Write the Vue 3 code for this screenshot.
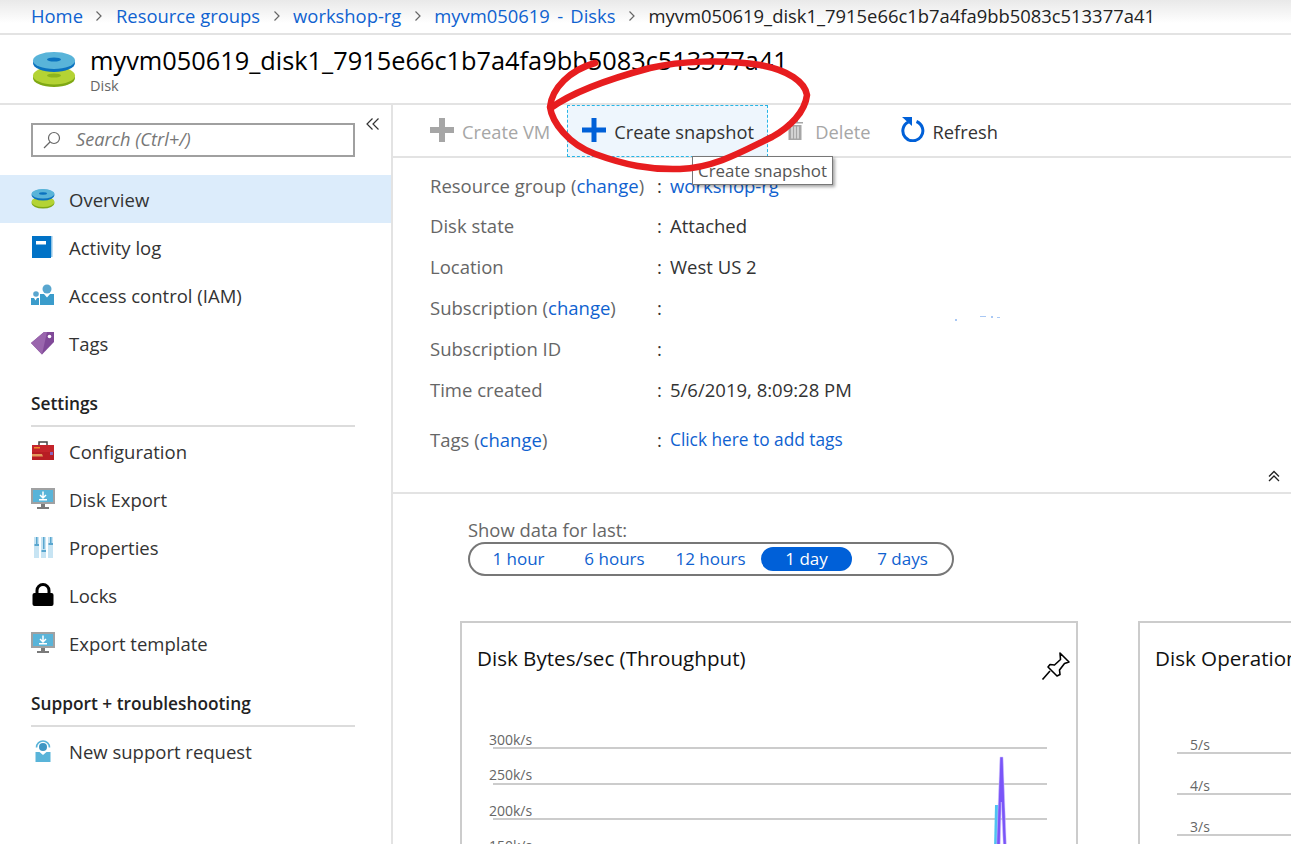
<script setup>
const crumbs = ['Home', 'Resource groups', 'workshop-rg', 'myvm050619 - Disks']
const ranges = ['1 hour', '6 hours', '12 hours', '1 day', '7 days']
const gridA = ['300k/s', '250k/s', '200k/s', '150k/s']
const gridB = ['5/s', '4/s', '3/s']
</script>

<template>
  <div class="page">
    <nav class="crumbs">
      <template v-for="c in crumbs" :key="c">
        <a class="link">{{ c }}</a>
        <svg class="chev" width="8" height="12" viewBox="0 0 8 12"><path d="M1.5 1.5 6 6l-4.5 4.5" fill="none" stroke="#666" stroke-width="1.2" /></svg>
      </template>
      <span class="crumb-last">myvm050619_disk1_7915e66c1b7a4fa9bb5083c513377a41</span>
    </nav>

    <header class="head">
      <svg class="head-icon" width="44" height="38" viewBox="0 0 44 38">
        <ellipse cx="22" cy="27" rx="21" ry="9" fill="#7fa814" />
        <ellipse cx="22" cy="24.500" rx="21" ry="9" fill="#b4d334" />
        <ellipse cx="22" cy="24.500" rx="7" ry="2" fill="#8fb51c" />
        <ellipse cx="22" cy="12" rx="21" ry="9" fill="#0b72bf" />
        <ellipse cx="22" cy="9.500" rx="21" ry="8.500" fill="#59b4d9" />
        <ellipse cx="22" cy="8.500" rx="7" ry="2" fill="#0b72bf" />
      </svg>
      <div>
        <h1>myvm050619_disk1_7915e66c1b7a4fa9bb5083c513377a41</h1>
        <div class="sub">Disk</div>
      </div>
    </header>

    <div class="body">
      <aside class="side">
        <div class="search-row">
          <div class="search">
            <svg width="20" height="20" viewBox="0 0 20 20"><circle cx="12" cy="8" r="5.500" fill="none" stroke="#666" stroke-width="1.200" /><path d="M8 12 2 18" stroke="#666" stroke-width="1.200" /></svg>
            <span>Search (Ctrl+/)</span>
          </div>
          <svg class="collapse" width="14" height="14" viewBox="0 0 14 14"><path d="M6.500 1.500 1 7l5.500 5.500M12.500 1.500 7 7l5.500 5.500" fill="none" stroke="#333" stroke-width="1.200" /></svg>
        </div>

        <div class="item active">
          <svg width="24" height="20" viewBox="0 0 24 20"><ellipse cx="12" cy="14" rx="11.500" ry="5.500" fill="#7fa814" /><ellipse cx="12" cy="12.800" rx="11.500" ry="5.200" fill="#b4d334" /><ellipse cx="12" cy="6" rx="11.500" ry="5.500" fill="#0b72bf" /><ellipse cx="12" cy="4.800" rx="11.500" ry="4.800" fill="#59b4d9" /><ellipse cx="12" cy="4.500" rx="4" ry="1.200" fill="#0b72bf" /></svg>
          Overview
        </div>
        <div class="item">
          <svg width="24" height="24" viewBox="0 0 24 24"><path d="M2 1h19.500v21H2z" fill="#8cc3e6" /><path d="M1 1h19v22H1z" fill="#0072c6" /><path d="M5 6h10v3.500H5z" fill="#fff" /></svg>
          Activity log
        </div>
        <div class="item">
          <svg width="24" height="24" viewBox="0 0 24 24"><circle cx="16" cy="6" r="4.500" fill="#59a6cf" /><circle cx="5" cy="11" r="2.800" fill="#59a6cf" /><path d="M9 11h14v11h-14zM0 15h8v7H0z" fill="#3b9ccb" /><path d="m13 11 3 3.500 3-3.500M3 15l1.500 2.500L6 15" fill="#fff" /></svg>
          Access control (IAM)
        </div>
        <div class="item">
          <svg width="24" height="24" viewBox="0 0 24 24"><path d="M0 12 13 1h10v10L11 23.500z" fill="#804998" /><path d="M0 12 13 1l3 0L11 23.500z" fill="#9a66ad" /><circle cx="18.500" cy="5.500" r="1.800" fill="#fff" /></svg>
          Tags
        </div>

        <div class="group">Settings</div>
        <div class="item">
          <svg width="24" height="24" viewBox="0 0 24 24"><path d="M8 6V3h8v3" fill="none" stroke="#444" stroke-width="1.500" /><path d="M1 6h22v7H1z" fill="#c4242b" /><path d="M1 13h22v8H1z" fill="#b81d24" /><path d="M1 15h10l1 2.500H1z" fill="#e29a5c" /><path d="M3 8h6v1.500H3z" fill="#ef8a2c" /><path d="M19 13h3v3h-3z" fill="#8a63b8" /></svg>
          Configuration
        </div>
        <div class="item">
          <svg width="24" height="24" viewBox="0 0 24 24"><path d="M0 1h24v16H0z" fill="#a0a1a2" /><path d="M2 3h20v12H2z" fill="#59b4d9" /><path d="M10 17h4v3h-4zM6 20h12v2H6z" fill="#7a7a7a" /><path d="M12 4.500v6M9 8l3 3 3-3M8 12.800h8" fill="none" stroke="#fff" stroke-width="1.500" /></svg>
          Disk Export
        </div>
        <div class="item">
          <svg width="24" height="24" viewBox="0 0 24 24"><path d="M3 2h5v21H3zM10 2h5v21h-5zM17 2h5v21h-5z" fill="#c7e4f3" /><path d="M5 2h1.500v7H5zM12 2h1.500v12H12zM19 2h1.500v6H19z" fill="#59a6cf" /><path d="M3.500 9h4.500v2H3.500zM10.500 15h4.500v2h-4.500zM17.500 8h4.500v2h-4.500z" fill="#59a6cf" /></svg>
          Properties
        </div>
        <div class="item">
          <svg width="24" height="24" viewBox="0 0 24 24"><path d="M6 11V7.500a6 6 0 0 1 12 0V11" fill="none" stroke="#000" stroke-width="3" /><rect x="1.500" y="10" width="21" height="13" rx="2" fill="#000" /></svg>
          Locks
        </div>
        <div class="item">
          <svg width="24" height="24" viewBox="0 0 24 24"><path d="M0 1h24v16H0z" fill="#a0a1a2" /><path d="M2 3h20v12H2z" fill="#59b4d9" /><path d="M10 17h4v3h-4zM6 20h12v2H6z" fill="#7a7a7a" /><path d="M12 4.500v6M9 8l3 3 3-3M8 12.800h8" fill="none" stroke="#fff" stroke-width="1.500" /></svg>
          Export template
        </div>

        <div class="group">Support + troubleshooting</div>
        <div class="item">
          <svg width="24" height="24" viewBox="0 0 24 24"><path d="M5.500 8.500a6.500 6.500 0 1 1 13 0" fill="none" stroke="#59b4d9" stroke-width="1.600" /><circle cx="12" cy="8" r="4" fill="#3f97c4" /><path d="M4.500 13h15v10h-15z" fill="#59b4d9" /><path d="m8.500 13 3.500 3 3.500-3z" fill="#fff" /></svg>
          New support request
        </div>
      </aside>

      <main class="main">
        <div class="toolbar">
          <div class="tool off">
            <svg width="24" height="24" viewBox="0 0 24 24"><path d="M9 0h6v9h9v6h-9v9H9v-9H0V9h9z" fill="#a6a6a6" /></svg>
            Create VM
          </div>
          <div class="tool snap">
            <svg width="24" height="24" viewBox="0 0 24 24"><path d="M9.500 0h5v9.500H24v5h-9.500V24h-5v-9.500H0v-5h9.500z" fill="#0060d8" /></svg>
            Create snapshot
          </div>
          <div class="tool off del">
            <svg width="16" height="20" viewBox="0 0 16 20"><path d="M0 2h16v1.500H0zM5 0h6v2H5zM1.500 5h13v15h-13z" fill="#a6a6a6" /><path d="M5 6.500v12M8 6.500v12M11 6.500v12" stroke="#fff" stroke-width="1" /></svg>
            Delete
          </div>
          <div class="tool refresh">
            <svg width="24" height="25" viewBox="0 0 24 25"><path d="M15.500 4.500a10 10 0 1 1-8 .300" fill="none" stroke="#0060d8" stroke-width="3" /><path d="M1 0h10v9z" fill="#0060d8" /></svg>
            Refresh
          </div>
        </div>

        <section class="info">
          <div class="info-row r1"><span class="k">Resource group (<a class="link">change</a>)</span><span class="colon">:</span><a class="link">workshop-rg</a></div>
          <div class="info-row"><span class="k">Disk state</span><span class="colon">:</span><span class="v">Attached</span></div>
          <div class="info-row"><span class="k">Location</span><span class="colon">:</span><span class="v">West US 2</span></div>
          <div class="info-row"><span class="k">Subscription (<a class="link">change</a>)</span><span class="colon">:</span><span class="v"></span></div>
          <div class="info-row"><span class="k">Subscription ID</span><span class="colon">:</span><span class="v"></span></div>
          <div class="info-row"><span class="k">Time created</span><span class="colon">:</span><span class="v">5/6/2019, 8:09:28 PM</span></div>
          <div class="info-row r7"><span class="k">Tags (<a class="link">change</a>)</span><span class="colon">:</span><a class="link small">Click here to add tags</a></div>
          <svg class="specks" width="50" height="8" viewBox="0 0 50 8"><path d="M0 5h2v2H0zM25 2h6v1h-6zM36 2h2v2h-2zM42 3h3v1h-3z" fill="#a9c8f4" /></svg>
          <svg class="fold" width="12" height="12" viewBox="0 0 12 12"><path d="M1 6.500 6 1.500l5 5M1 11 6 6l5 5" fill="none" stroke="#222" stroke-width="1.300" /></svg>
        </section>

        <section class="charts">
          <div class="range-label">Show data for last:</div>
          <div class="range">
            <span v-for="r in ranges" :key="r" class="range-item" :class="{ on: r === '1 day' }">{{ r }}</span>
          </div>
          <div class="cards">
            <div class="card first">
              <div class="card-title">Disk Bytes/sec (Throughput)</div>
              <svg class="pin" width="30" height="30" viewBox="0 0 30 30"><path d="M19 2 28 11l-4.500 1.500-5 6.500 .5 4.500-3 1.500-9-9 2-2.500 4.500.5 6-5.500z" fill="#fff" stroke="#000" stroke-width="1.600" stroke-linejoin="round" /><path d="M9 20 1.500 28.500" stroke="#000" stroke-width="1.600" /></svg>
              <div class="grid grid-a">
                <div v-for="g in gridA" :key="g" class="grid-row">{{ g }}</div>
              </div>
              <svg class="spike" width="20" height="100" viewBox="0 0 20 100"><path d="M5 55h3.500L8 100H4z" fill="#4fc3f0" /><path d="M10 7h3l3.500 93h-3L11.300 52 10 100H6.500z" fill="#7a55f8" stroke="#d5c9fd" stroke-width=".5" /></svg>
            </div>
            <div class="card second">
              <div class="card-title">Disk Operations/sec</div>
              <div class="grid grid-b">
                <div v-for="g in gridB" :key="g" class="grid-row">{{ g }}</div>
              </div>
            </div>
          </div>
        </section>
      </main>
    </div>

    <div class="tip">Create snapshot</div>
    <svg class="scribble" width="1291" height="844" viewBox="0 0 1291 844">
      <path d="M595 63C570 70 552 88 550 107 552 122 568 144 595 154 625 165 650 170 680 169 715 168 745 150 772 137 790 127 805 112 807 95 805 82 788 70 760 65 725 59 680 61 650 68 620 76 575 90 551 108" fill="none" stroke="#e71d1f" stroke-width="6.500" stroke-linecap="round" />
    </svg>
  </div>
</template>

<style>
html, body { margin: 0; background: #fff; }
</style>

<style scoped>
.page {
  position: relative;
  width: 1291px;
  height: 844px;
  overflow: hidden;
  background: #fff;
  color: #333;
  font-family: "Open Sans", "Noto Sans", sans-serif;
  font-size: 18.5px;
}
.link { color: #0f62d0; }
.crumbs {
  height: 35px;
  box-sizing: border-box;
  padding-left: 31px;
  display: flex;
  align-items: center;
  gap: 12.500px;
  font-size: 18.4px;
  background: linear-gradient(#e9e9e9, #fff 70%);
  border-bottom: 2px solid #e3e3e3;
  padding-bottom: 2px;
}
.crumbs a:nth-of-type(4) { word-spacing: 2.500px; }
.crumb-last { color: #222; }
.head {
  height: 66px;
  padding-top: 2px;
  display: flex;
  align-items: center;
  padding-left: 32px;
  gap: 14px;
  border-bottom: 2px solid #e3e3e3;
}
h1 {
  margin: 0;
  font-size: 25.35px;
  line-height: 30px;
  font-weight: 400;
  color: #000;
}
.sub { margin-top: 2px; font-size: 14.5px; line-height: 18px; color: #666; }
.body { display: flex; height: 739px; }
.side {
  width: 391px;
  flex: none;
  border-right: 2px solid #e3e3e3;
}
.search-row { height: 70px; position: relative; padding: 18px 0 0 31px; box-sizing: border-box; }
.search {
  width: 324px;
  height: 34px;
  box-sizing: border-box;
  border: 2px solid #a0a0a0;
  display: flex;
  align-items: center;
  padding-left: 9px;
  gap: 14px;
  color: #777;
  font-style: italic;
  font-size: 18.2px;
}
.search span { margin-top: -2px; }
.collapse { position: absolute; left: 366px; top: 12px; }
.item {
  height: 48px;
  box-sizing: border-box;
  padding-top: 1px;
  display: flex;
  align-items: center;
  padding-left: 31px;
  gap: 14px;
}
.item svg { width: 24px; flex: none; margin-top: -1px; }
.active { background: #dcecfb; }
.group {
  margin: 24px 0 0 31px;
  height: 36px;
  box-sizing: border-box;
  font-size: 17.3px;
  line-height: 25px;
  font-weight: 600;
  color: #222;
  border-bottom: 2px solid #dcdcdc;
  width: 324px;
}
.main { flex: 1; min-width: 0; }
.toolbar {
  height: 53px;
  box-sizing: border-box;
  display: flex;
  align-items: center;
  border-bottom: 2px solid #e3e3e3;
  padding-left: 37px;
  font-size: 18.3px;
}
.tool { display: flex; align-items: center; gap: 8px; height: 100%; box-sizing: border-box; padding-top: 2px; }
.tool svg { margin-top: -4px; }
.off { color: #a6a6a6; }
.snap {
  width: 201px;
  height: 52px;
  margin-left: 17px;
  padding-left: 14px;
  background: #eef6fd;
  border: 1px dashed #27b5e6;
}
.del { margin-left: 19px; gap: 12px; }
.refresh { margin-left: 30px; }
.info {
  height: 336px;
  box-sizing: border-box;
  position: relative;
  padding: 8px 0 0 37px;
  border-bottom: 2px solid #e3e3e3;
}
.info-row { height: 41px; display: flex; align-items: center; }
.r1 { height: 39px; }
.r7 { height: 59px; }
.k { width: 227px; color: #666; flex: none; }
.colon { width: 13px; color: #333; flex: none; }
.v { color: #333; }
.small { font-size: 17.3px; }
.specks { position: absolute; left: 562px; top: 156px; }
.fold { position: absolute; right: 11px; top: 312px; }
.charts { padding: 24px 0 0 75px; position: relative; }
.range-label { font-size: 18.4px; line-height: 24px; color: #666; }
.range {
  width: 486px;
  height: 34px;
  box-sizing: border-box;
  border: 2px solid #777;
  border-radius: 17px;
  display: flex;
  align-items: center;
  gap: 5px;
  padding-left: 3px;
}
.range-item {
  width: 91px;
  height: 24px;
  line-height: 24px;
  border-radius: 12px;
  text-align: center;
  color: #0f62d0;
  font-size: 17px;
}
.on { background: #0060d8; color: #fff; }
.cards { display: flex; gap: 60px; margin-top: 45px; margin-left: -8px; }
.card {
  position: relative;
  width: 618px;
  height: 400px;
  flex: none;
  box-sizing: border-box;
  border: 2px solid #ccc;
}
.card-title {
  margin: 22px 0 0 15px;
  font-size: 20.6px;
  line-height: 26px;
  color: #111;
  white-space: nowrap;
}
.pin { position: absolute; left: 579px; top: 28px; }
.grid { font-size: 14px; color: #666; }
.grid-a { margin: 43px 0 0 31px; width: 554px; }
.grid-row {
  height: 35.300px;
  box-sizing: border-box;
  border-bottom: 2px solid #ccc;
  line-height: 18px;
  padding-top: 17px;
  text-indent: -4px;
}
.grid-b { margin: 42px 0 0 37px; }
.grid-b .grid-row { height: 41px; padding-top: 23px; text-indent: 13px; }
.second { overflow: hidden; }
.spike { position: absolute; left: 528px; top: 127px; }
.tip {
  position: absolute;
  left: 692px;
  top: 156px;
  height: 29px;
  box-sizing: border-box;
  padding: 0 5px;
  line-height: 27px;
  border: 1px solid #777;
  background: #fff;
  box-shadow: 2px 2px 3px rgba(0, 0, 0, 0.35);
  font-size: 16.9px;
  color: #555;
  white-space: nowrap;
}
.scribble { position: absolute; left: 0; top: 0; pointer-events: none; }
</style>
